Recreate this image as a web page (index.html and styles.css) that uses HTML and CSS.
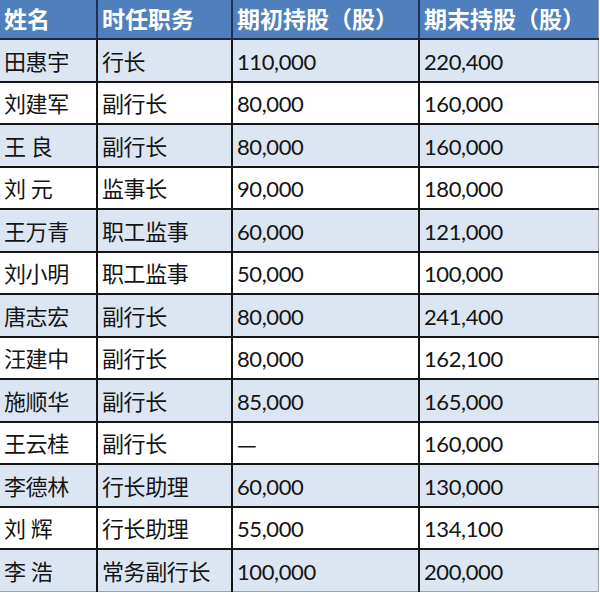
FILE: index.html
```html
<!DOCTYPE html>
<html lang="zh">
<head>
<meta charset="utf-8">
<link rel="stylesheet" href="styles.css">
</head>
<body>
<table class="grid">
  <colgroup>
    <col class="c1"><col class="c2"><col class="c3"><col class="c4">
  </colgroup>
  <thead>
    <tr class="head"><th>姓名</th><th>时任职务</th><th>期初持股（股）</th><th>期末持股（股）</th></tr>
  </thead>
  <tbody>
    <tr class="alt"><td>田惠宇</td><td>行长</td><td>110,000</td><td>220,400</td></tr>
    <tr><td>刘建军</td><td>副行长</td><td>80,000</td><td>160,000</td></tr>
    <tr class="alt"><td>王 良</td><td>副行长</td><td>80,000</td><td>160,000</td></tr>
    <tr><td>刘 元</td><td>监事长</td><td>90,000</td><td>180,000</td></tr>
    <tr class="alt"><td>王万青</td><td>职工监事</td><td>60,000</td><td>121,000</td></tr>
    <tr><td>刘小明</td><td>职工监事</td><td>50,000</td><td>100,000</td></tr>
    <tr class="alt"><td>唐志宏</td><td>副行长</td><td>80,000</td><td>241,400</td></tr>
    <tr><td>汪建中</td><td>副行长</td><td>80,000</td><td>162,100</td></tr>
    <tr class="alt"><td>施顺华</td><td>副行长</td><td>85,000</td><td>165,000</td></tr>
    <tr><td>王云桂</td><td>副行长</td><td><span class="dash">—</span></td><td>160,000</td></tr>
    <tr class="alt"><td>李德林</td><td>行长助理</td><td>60,000</td><td>130,000</td></tr>
    <tr><td>刘 辉</td><td>行长助理</td><td>55,000</td><td>134,100</td></tr>
    <tr class="alt"><td>李 浩</td><td>常务副行长</td><td>100,000</td><td>200,000</td></tr>
  </tbody>
</table>
</body>
</html>
```
FILE: styles.css
```css
html, body {
  margin: 0;
  padding: 0;
  background: #ffffff;
}
.grid {
  border-collapse: collapse;
  table-layout: fixed;
  width: 598px;
  font-family: Lato, "Noto Sans CJK SC", sans-serif;
  font-size: 22px;
  line-height: 1;
  color: #141414;
  border-right: 1px solid #9aa3ad;
  border-bottom: 1px solid #9aa3ad;
}
.c1 { width: 97px; }
.c2 { width: 135px; }
.c3 { width: 187px; }
.c4 { width: 179px; }
.grid th, .grid td {
  text-align: left;
  vertical-align: middle;
  padding: 0 0 0 4px;
  white-space: nowrap;
  letter-spacing: -0.4px;
}
.head th {
  height: 38px;
  background: #4f80bd;
  color: #ffffff;
  font-weight: 700;
  font-size: 23px;
  letter-spacing: 0;
  border-left: 2px solid #1f3350;
  border-bottom: 2px solid #1f2a38;
}
.head th:first-child { border-left: none; }
.grid td {
  height: 42.5px;
  padding-top: 3px;
  box-sizing: border-box;
  border-left: 2px solid #151515;
  border-top: 2px solid #151515;
  background: #ffffff;
}
.grid td:first-child { border-left: none; }
.grid tbody tr:first-child td { border-top: none; }
.grid tr.alt td { background: #dce6f2; }
.dash {
  font-family: "Noto Sans CJK SC", sans-serif;
}
```
